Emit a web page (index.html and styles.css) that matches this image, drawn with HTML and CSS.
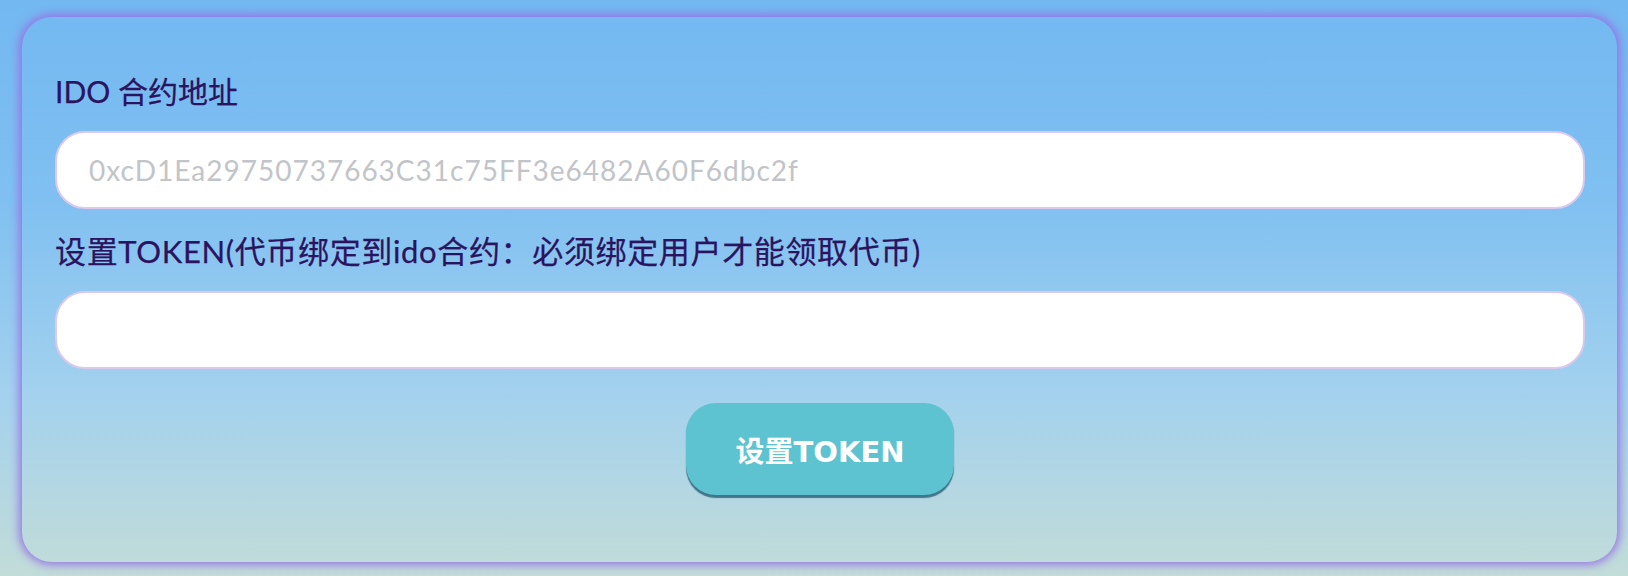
FILE: index.html
```html
<!DOCTYPE html>
<html lang="zh">
<head>
<meta charset="utf-8">
<title>设置TOKEN</title>
<link rel="stylesheet" href="styles.css">
</head>
<body>
<div class="page">
  <div class="card">
    <label class="field-label first" for="ido">IDO 合约地址</label>
    <input class="field-input" id="ido" type="text" placeholder="0xcD1Ea29750737663C31c75FF3e6482A60F6dbc2f">
    <label class="field-label second" for="token">设置TOKEN(代币绑定到ido合约：必须绑定用户才能领取代币)</label>
    <input class="field-input" id="token" type="text">
    <div class="actions">
      <button class="btn" type="button">设置TOKEN</button>
    </div>
  </div>
</div>
</body>
</html>
```

FILE: styles.css
```css
html, body {
  margin: 0;
  padding: 0;
  height: 100%;
}

body {
  background: linear-gradient(180deg, #73b8f1 0%, #80c0f1 35%, #a3d1ee 68%, #c2dcd8 100%);
  font-family: "Lato", "Noto Sans CJK SC", sans-serif;
  overflow: hidden;
}

.page {
  padding: 17px 11px 15px 22px;
}

.card {
  display: flex;
  flex-direction: column;
  padding: 52px 32px 67px 33px;
  border-radius: 30px;
  box-shadow: 0 0 9px 3px rgba(150, 112, 228, 0.9);
}

.field-label {
  display: block;
  font-size: 31px;
  font-weight: 400;
  line-height: 45px;
  color: #2a135f;
  margin-bottom: 17px;
  -webkit-text-stroke: 0.25px #2a135f;
}

.field-label.first {
  font-size: 30px;
}

.field-label.second {
  margin-top: 20px;
  letter-spacing: 0.65px;
}

.field-input {
  box-sizing: border-box;
  width: 100%;
  height: 78px;
  border: 2px solid #dcc9ec;
  border-radius: 30px;
  background: #ffffff;
  padding: 0 32px;
  font-family: "Lato", "Noto Sans CJK SC", sans-serif;
  font-size: 28px;
  letter-spacing: 1px;
  color: #333;
  outline: none;
}

.field-input::placeholder {
  color: #c1c4c8;
}

.actions {
  display: flex;
  justify-content: center;
  margin-top: 34px;
}

.btn {
  width: 268px;
  height: 92px;
  border: none;
  border-radius: 30px;
  background: #5ec3d0;
  color: #ffffff;
  font-family: "DejaVu Sans", "Noto Sans CJK SC", sans-serif;
  font-weight: bold;
  font-size: 29px;
  box-shadow: 0 3px 1px rgba(45, 100, 120, 0.85);
  cursor: pointer;
}
```
